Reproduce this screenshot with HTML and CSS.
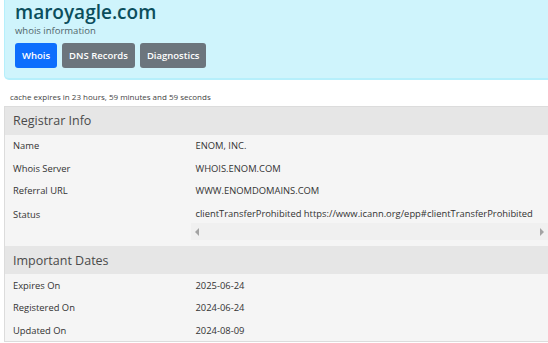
FILE: index.html
```html
<!DOCTYPE html>
<html lang="en">
<head>
  <meta charset="UTF-8">
  <title>maroyagle.com - whois information</title>
  <link rel="stylesheet" href="styles.css">
</head>
<body>
  <div class="page">
    <header class="hero">
      <h1>maroyagle.com</h1>
      <p class="sub">whois information</p>
      <nav class="tabs">
        <a class="btn btn-primary" href="#">Whois</a>
        <a class="btn btn-secondary" href="#">DNS Records</a>
        <a class="btn btn-secondary" href="#">Diagnostics</a>
      </nav>
    </header>

    <p class="cache">cache expires in 23 hours, 59 minutes and 59 seconds</p>

    <table class="info">
      <tr class="section"><th colspan="2">Registrar Info</th></tr>
      <tr><td class="key">Name</td><td>ENOM, INC.</td></tr>
      <tr><td class="key">Whois Server</td><td>WHOIS.ENOM.COM</td></tr>
      <tr><td class="key">Referral URL</td><td>WWW.ENOMDOMAINS.COM</td></tr>
      <tr class="status">
        <td class="key">Status</td>
        <td>
          <div class="scroll">
            <div class="scroll-text">clientTransferProhibited https://www.icann.org/epp#clientTransferProhibited</div>
            <div class="scrollbar">
              <span class="arrow arrow-left"></span>
              <span class="arrow arrow-right"></span>
            </div>
          </div>
        </td>
      </tr>
      <tr class="section"><th colspan="2">Important Dates</th></tr>
      <tr><td class="key">Expires On</td><td>2025-06-24</td></tr>
      <tr><td class="key">Registered On</td><td>2024-06-24</td></tr>
      <tr class="last"><td class="key">Updated On</td><td>2024-08-09</td></tr>
    </table>
  </div>
</body>
</html>
```

FILE: styles.css
```css
* {
  box-sizing: border-box;
  margin: 0;
  padding: 0;
}

body {
  font-family: 'Open Sans', 'Noto Sans', sans-serif;
  background: #ffffff;
  color: #333;
  overflow: hidden;
}

.page {
  padding-left: 4px;
}

.hero {
  background: #cff4fc;
  border-bottom: 2px solid #b6effb;
  border-left: 1px solid #b6effb;
  border-radius: 0 0 0 5px;
  padding: 1px 0 10px 10px;
  height: 80px;
}

.hero h1 {
  font-size: 19px;
  font-weight: 600;
  color: #0b4e5c;
  line-height: 22px;
}

.sub {
  font-size: 9.5px;
  color: #50646a;
  line-height: 11px;
  margin-top: 2px;
}

.tabs {
  display: flex;
  gap: 5px;
  margin-top: 7px;
}

.btn {
  display: inline-block;
  height: 25px;
  line-height: 25px;
  padding: 0 7px;
  border-radius: 3px;
  font-size: 9.5px;
  font-weight: 600;
  color: #fff;
  text-decoration: none;
}

.btn-primary {
  background: #0d6efd;
}

.btn-secondary {
  background: #6c757d;
}

.cache {
  font-size: 8px;
  color: #444;
  padding: 11px 0 0 6px;
  line-height: 12px;
}

.info {
  width: 544px;
  border-collapse: collapse;
  margin-top: 3px;
  border-left: 1px solid #dcdcdc;
  border-top: 1px solid #dcdcdc;
  border-bottom: 1px solid #dcdcdc;
  font-size: 9.4px;
  color: #333;
}

.info th {
  background: #e6e6e6;
  text-align: left;
  font-weight: 400;
  font-size: 12.5px;
  color: #4a4a4a;
  height: 28px;
  padding-left: 8px;
}

.info td {
  background: #f5f5f5;
  height: 22.5px;
  padding: 0 0 0 8px;
  white-space: nowrap;
}

.info td.key {
  width: 183px;
}

.info tr.status td {
  vertical-align: top;
  padding-top: 6px;
  height: 44px;
}

.scroll-text {
  line-height: 12px;
}

.scrollbar {
  position: relative;
  height: 17px;
  margin: 3px 0 0 -5px;
  background: #f0f0f0;
}

.arrow {
  position: absolute;
  top: 5px;
  width: 0;
  height: 0;
  border-top: 4px solid transparent;
  border-bottom: 4px solid transparent;
}

.arrow-left {
  left: 4px;
  border-right: 4px solid #a3a3a3;
}

.arrow-right {
  right: 4px;
  border-left: 4px solid #a3a3a3;
}
```
